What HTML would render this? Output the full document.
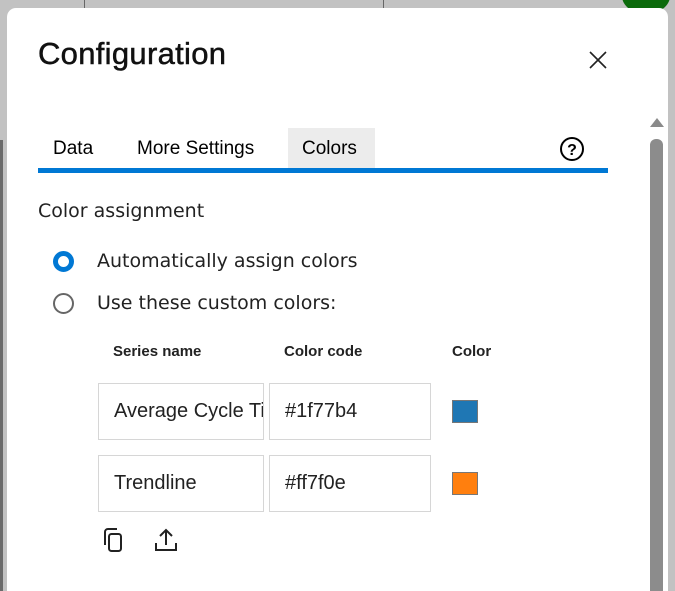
<!DOCTYPE html>
<html style="width:675px;height:591px;overflow:hidden"><head><style>
*{margin:0;padding:0;box-sizing:border-box}
body{width:675px;height:591px;overflow:hidden;background:#c2c2c2;font-family:"Liberation Sans",sans-serif;position:relative;color:#000}
.abs{position:absolute}
.dlg{position:absolute;left:7px;top:8px;width:661px;height:600px;background:#fff;border-radius:9px}
.t{position:absolute;font-size:19px}
.inp{position:absolute;border:1px solid #d6d6d6;height:57px;font-size:20px;line-height:55px;padding-left:15px;overflow:hidden;white-space:nowrap;color:#222}
.h{position:absolute;font-size:15px;font-weight:bold;color:#222}
</style></head><body>
<div class="abs" style="left:84px;top:0;width:1px;height:8px;background:#666"></div>
<div class="abs" style="left:383px;top:0;width:1px;height:8px;background:#666"></div>
<div class="abs" style="left:622px;top:-22px;width:48px;height:36px;border-radius:50%;background:#0b6a0b"></div>
<div class="abs" style="left:0;top:140px;width:3px;height:451px;background:#6a6a6a"></div>
<div class="dlg"></div>
<div class="abs" style="left:38px;top:36px;font-size:31px;color:#111;letter-spacing:0.3px;-webkit-text-stroke:0.5px #111">Configuration</div>
<svg class="abs" style="left:588px;top:50px" width="20" height="20" viewBox="0 0 20 20"><path d="M2 2L18 18M18 2L2 18" stroke="#222" stroke-width="1.6"/></svg>
<div class="abs" style="left:288px;top:128px;width:87px;height:40px;background:#ececec"></div>
<div class="t" style="left:53px;top:138px;font-size:19px">Data</div>
<div class="t" style="left:137px;top:138px">More Settings</div>
<div class="t" style="left:302px;top:138px">Colors</div>
<svg class="abs" style="left:559px;top:136px" width="26" height="26" viewBox="0 0 26 26"><circle cx="13" cy="13" r="11" fill="none" stroke="#000" stroke-width="2"/><text x="13" y="19" text-anchor="middle" font-family="Liberation Sans" font-weight="bold" font-size="16">?</text></svg>
<div class="abs" style="left:38px;top:168px;width:570px;height:5px;background:#0078d4"></div>
<div class="abs" style="left:650px;top:118px;width:0;height:0;border-left:7px solid transparent;border-right:7px solid transparent;border-bottom:9px solid #8a8a8a"></div>
<div class="abs" style="left:650px;top:139px;width:13px;height:460px;border-radius:6px;background:#8c8c8c"></div>
<div class="abs" style="left:38px;top:200px;color:#222;font-family:'DejaVu Sans',sans-serif;font-size:19px">Color assignment</div>
<div class="abs" style="left:53px;top:251px;width:21px;height:21px;border-radius:50%;border:5px solid #0078d4"></div>
<div class="abs" style="left:53px;top:293px;width:21px;height:21px;border-radius:50%;border:2.5px solid #666"></div>
<div class="abs" style="left:97px;top:250px;font-family:'DejaVu Sans',sans-serif;font-size:19px;color:#222">Automatically assign colors</div>
<div class="abs" style="left:97px;top:292px;font-family:'DejaVu Sans',sans-serif;font-size:19px;color:#222">Use these custom colors:</div>
<div class="h" style="left:113px;top:343px">Series name</div>
<div class="h" style="left:284px;top:343px">Color code</div>
<div class="h" style="left:452px;top:343px">Color</div>
<div class="inp" style="left:98px;top:383px;width:166px">Average Cycle Time</div>
<div class="inp" style="left:269px;top:383px;width:162px">#1f77b4</div>
<div class="abs" style="left:452px;top:400px;width:26px;height:23px;background:#1f77b4;border:1px solid #777"></div>
<div class="inp" style="left:98px;top:455px;width:166px">Trendline</div>
<div class="inp" style="left:269px;top:455px;width:162px">#ff7f0e</div>
<div class="abs" style="left:452px;top:472px;width:26px;height:23px;background:#ff7f0e;border:1px solid #777"></div>
<svg class="abs" style="left:102px;top:527px" width="30" height="28" viewBox="0 0 30 28"><rect x="7" y="7" width="12" height="17" rx="2.5" fill="none" stroke="#222" stroke-width="2"/><path d="M3 18V5a3 3 0 0 1 3-3h9" fill="none" stroke="#222" stroke-width="2"/></svg>
<svg class="abs" style="left:152px;top:527px" width="28" height="28" viewBox="0 0 28 28"><path d="M14 18V3M8 9l6-6 6 6M4 16v7h20v-7" fill="none" stroke="#222" stroke-width="2"/></svg>
</body></html>
